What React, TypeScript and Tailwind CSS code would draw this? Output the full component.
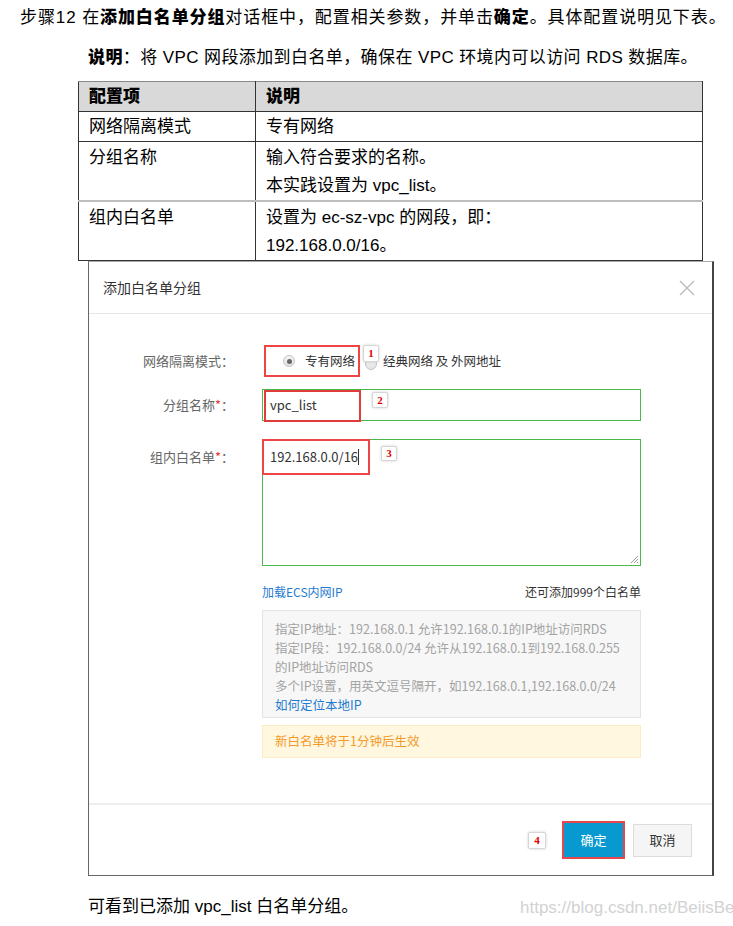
import React from 'react';

const doc = { fontFamily: '"Liberation Sans", "Noto Sans CJK SC", sans-serif' };
const ui = { fontFamily: '"Noto Sans CJK SC", "Noto Sans", sans-serif' };

function Badge({ n, className }: { n: string; className: string }) {
  return (
    <div
      className={`absolute flex items-center justify-center bg-white border border-[#d6d6d6] rounded-[2px] shadow-[0_0_3px_rgba(0,0,0,0.18)] text-[#e00000] text-[11px] font-bold leading-none ${className}`}
      style={{ fontFamily: '"Liberation Serif", serif' }}
    >
      {n}
    </div>
  );
}

function Radio({ checked }: { checked?: boolean }) {
  return (
    <span className="w-[12px] h-[12px] rounded-full border border-[#c4c4c4] bg-gradient-to-b from-[#f4f4f4] to-[#e2e2e2] flex items-center justify-center shrink-0">
      {checked && <span className="w-[5px] h-[5px] rounded-full bg-[#666]" />}
    </span>
  );
}

function Label({ text, required }: { text: string; required?: boolean }) {
  return (
    <div className="w-[145px] text-right text-[13px] text-[#666] shrink-0">
      {text}
      {required && <span className="text-[#e33]">*</span>}：
    </div>
  );
}

export default function App() {
  return (
    <div className="w-[733px] h-[926px] bg-white relative overflow-hidden text-black" style={doc}>
      <p className="pl-[20px] pt-[5px] leading-[26px] text-[17px] tracking-[0.9px] whitespace-nowrap">
        步骤12 在<b className="font-black">添加白名单分组</b>对话框中，配置相关参数，并单击<b className="font-black">确定</b>。具体配置说明见下表。
      </p>
      <p className="pl-[88px] mt-[14px] leading-[26px] text-[17px] tracking-[0.4px] whitespace-nowrap">
        <b className="font-black">说明</b>：将 VPC 网段添加到白名单，确保在 VPC 环境内可以访问 RDS 数据库。
      </p>

      <table className="ml-[78px] mt-[10px] w-[625px] table-fixed border-collapse text-[17px]">
        <colgroup>
          <col className="w-[177px]" />
          <col />
        </colgroup>
        <tbody>
          <tr className="h-[30px] bg-[#d9d9d9]">
            <td className="border border-[#333] border-t-[#888] pl-[10px] font-black">配置项</td>
            <td className="border border-[#333] border-t-[#888] pl-[10px] font-black">说明</td>
          </tr>
          <tr className="h-[30px]">
            <td className="border border-[#333] pl-[10px]">网络隔离模式</td>
            <td className="border border-[#333] pl-[10px]">专有网络</td>
          </tr>
          <tr>
            <td className="border border-[#333] border-b-2 border-b-[#bdbdbd] pl-[10px] pt-[2px] leading-[28px] align-top">分组名称</td>
            <td className="border border-[#333] border-b-2 border-b-[#bdbdbd] pl-[10px] pt-[2px] leading-[28px] align-top">
              <div>输入符合要求的名称。</div>
              <div>本实践设置为 vpc_list。</div>
            </td>
          </tr>
          <tr>
            <td className="border border-[#333] pl-[10px] pt-[2px] leading-[28px] align-top">组内白名单</td>
            <td className="border border-[#333] pl-[10px] pt-[2px] leading-[28px] align-top">
              <div>设置为 ec-sz-vpc 的网段，即：</div>
              <div>192.168.0.0/16。</div>
            </td>
          </tr>
        </tbody>
      </table>

      {/* dialog screenshot */}
      <div
        className="ml-[88px] w-[626px] h-[615px] border border-[#666] border-t-[#aaa] border-r-2 border-r-[#444] flex flex-col"
        style={ui}
      >
        <div className="h-[52px] border-b border-[#e6e6e6] flex items-center justify-between pl-[14px] pr-[17px] shrink-0">
          <span className="text-[14px] text-[#333]">添加白名单分组</span>
          <svg width="16" height="16" viewBox="0 0 16 16" className="text-[#bbb]">
            <path d="M1 1 L15 15 M15 1 L1 15" stroke="currentColor" strokeWidth="1.4" fill="none" />
          </svg>
        </div>

        <div className="flex-1 pt-[31px]">
          {/* row 1 */}
          <div className="flex items-center h-[32px]">
            <Label text="网络隔离模式" />
            <div className="relative ml-[28px] w-[379px] h-full flex items-center text-[12.5px] text-[#333]">
              <span className="ml-[21px]">
                <Radio checked />
              </span>
              <span className="ml-[10px]">专有网络</span>
              <span className="ml-[10px] mt-[5px]">
                <Radio />
              </span>
              <span className="ml-[6px]">经典网络 及 外网地址</span>
              <div className="absolute left-[2px] top-0 w-[96px] h-[32px] border-2 border-[#ee4444]" />
              <Badge n="1" className="left-[101px] top-0 w-[16px] h-[17px]" />
            </div>
          </div>

          {/* row 2 */}
          <div className="flex items-center mt-[12px]">
            <Label text="分组名称" required />
            <div className="relative ml-[28px] w-[379px] h-[32px] border border-[#4cb84c] flex items-center pl-[7px] text-[13px] text-[#333]">
              vpc_list
              <div className="absolute left-[1px] top-0 w-[97px] h-[32px] border-2 border-[#e03c3c]" />
              <Badge n="2" className="left-[109px] top-[2px] w-[16px] h-[16px]" />
            </div>
          </div>

          {/* row 3 */}
          <div className="flex items-start mt-[18px]">
            <div className="pt-[8px]">
              <Label text="组内白名单" required />
            </div>
            <div className="relative ml-[28px] w-[379px] h-[127px] border border-[#4cb84c] pl-[7px] pt-[7px] text-[13px] text-[#333] leading-[20px]">
              <span>192.168.0.0/16</span>
              <span className="inline-block w-px h-[16px] bg-[#333] align-[-3px]" />
              <div className="absolute -left-px -top-px w-[108px] h-[36px] border-2 border-[#ee4444]" />
              <Badge n="3" className="left-[118px] top-[6px] w-[16px] h-[15px]" />
              <svg width="9" height="9" viewBox="0 0 9 9" className="absolute right-[1px] bottom-[1px]">
                <path d="M8 1 L1 8 M8 4 L4 8 M8 7 L7 8" stroke="#9a9a9a" strokeWidth="1" fill="none" />
              </svg>
            </div>
          </div>

          {/* link row */}
          <div className="flex mt-[18px]">
            <div className="w-[145px] shrink-0" />
            <div className="ml-[28px] w-[379px] flex justify-between text-[12px] leading-[16px]">
              <span className="text-[#1f7bd0]">加载ECS内网IP</span>
              <span className="text-[#333]">还可添加999个白名单</span>
            </div>
          </div>

          {/* info */}
          <div className="flex mt-[10px]">
            <div className="w-[145px] shrink-0" />
            <div className="ml-[28px] w-[379px] flex flex-col gap-[7px]">
              <div className="h-[108px] bg-[#f7f7f7] border border-[#e4e4e4] pl-[12px] pt-[8px] text-[12.5px] leading-[19px] text-[#a3a3a3] whitespace-nowrap">
                <div>指定IP地址：192.168.0.1 允许192.168.0.1的IP地址访问RDS</div>
                <div>指定IP段：192.168.0.0/24 允许从192.168.0.1到192.168.0.255</div>
                <div>的IP地址访问RDS</div>
                <div>多个IP设置，用英文逗号隔开，如192.168.0.1,192.168.0.0/24</div>
                <div className="text-[#1f7bd0]">如何定位本地IP</div>
              </div>
              <div className="h-[33px] bg-[#fff7e0] border border-[#fbecc4] pl-[12px] flex items-center text-[12.5px] text-[#f39a2a]">
                新白名单将于1分钟后生效
              </div>
            </div>
          </div>
        </div>

        <div className="h-[72px] border-t-2 border-[#eeeeee] flex items-center justify-end pr-[20px] shrink-0">
          <div className="relative w-[18px] h-[17px] mr-[16px]">
            <Badge n="4" className="left-0 top-0 w-[18px] h-[17px]" />
          </div>
          <button className="w-[63px] h-[38px] border-2 border-[#e8474a] bg-[#0799cf] text-white text-[13px]">
            确定
          </button>
          <button className="ml-[8px] w-[59px] h-[33px] border border-[#dcdcdc] bg-[#f5f5f5] text-[#333] text-[13px]">
            取消
          </button>
        </div>
      </div>

      <p className="pl-[88px] mt-[18px] leading-[26px] text-[17px] whitespace-nowrap">
        可看到已添加 vpc_list 白名单分组。
      </p>
      <span className="absolute left-[520px] top-[895px] leading-[26px] text-[17px] text-[#d2d2d2] whitespace-nowrap">
        https://blog.csdn.net/BeiisBei
      </span>
    </div>
  );
}
